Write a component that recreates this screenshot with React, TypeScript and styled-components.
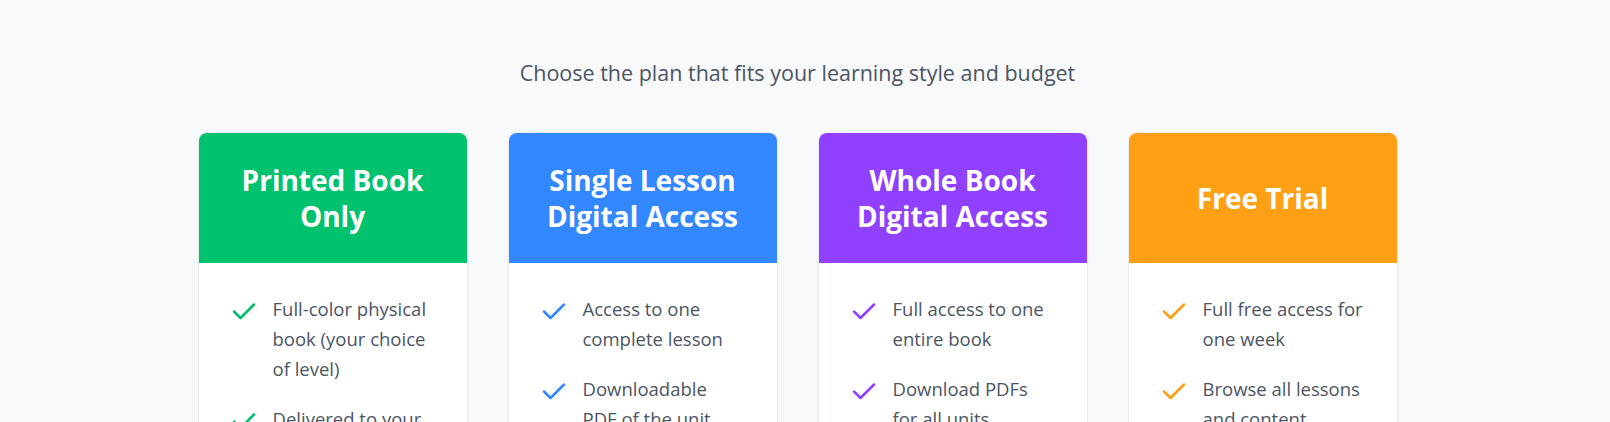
import React from "react";
import styled, { createGlobalStyle } from "styled-components";

const GlobalStyle = createGlobalStyle`
  html, body {
    margin: 0;
    padding: 0;
    background: #f8f9fb;
  }
  body {
    font-family: "Open Sans", "Noto Sans", sans-serif;
    color: #4b5563;
  }
  * { box-sizing: border-box; }
`;

const Section = styled.section`
  padding: 58px 15px 60px 0;
  display: flex;
  flex-direction: column;
  align-items: center;
`;

const Subtitle = styled.p`
  margin: 0 0 45px;
  font-size: 21.5px;
  line-height: 30px;
  color: #4b5563;
  text-align: center;
`;

const Grid = styled.div`
  display: grid;
  grid-template-columns: repeat(4, 268px);
  gap: 42px;
`;

const Card = styled.div`
  background: #ffffff;
  border-radius: 8px;
  overflow: hidden;
  box-shadow: 0 1px 3px rgba(15, 23, 42, 0.08), 0 0 0 1px rgba(15, 23, 42, 0.03);
  display: flex;
  flex-direction: column;
`;

const Header = styled.div<{ $bg: string }>`
  background: ${(p) => p.$bg};
  min-height: 130px;
  padding: 24px 20px;
  display: flex;
  align-items: center;
  justify-content: center;
`;

const Title = styled.h3`
  margin: 0;
  color: #ffffff;
  font-size: 28px;
  line-height: 36.5px;
  font-weight: 700;
  text-align: center;
`;

const Body = styled.ul`
  list-style: none;
  margin: 0;
  padding: 31px 20px 32px 33px;
  display: flex;
  flex-direction: column;
  gap: 20px;
`;

const Item = styled.li`
  display: flex;
  align-items: flex-start;
  gap: 17px;
  font-size: 18.5px;
  line-height: 30px;
  color: #4b5563;
`;

const ItemText = styled.span`
  flex: 0 1 162px;
`;

const CheckIcon = styled.svg<{ $c: string }>`
  flex: 0 0 24px;
  width: 24px;
  height: 20px;
  margin-top: 8px;
  stroke: ${(p) => p.$c};
`;

const Check = ({ color }: { color: string }) => (
  <CheckIcon $c={color} viewBox="0 0 24 20" fill="none" strokeWidth={2.5} strokeLinecap="round" strokeLinejoin="round">
    <path d="M2 9.5 L8.5 16 L22 2.5" />
  </CheckIcon>
);

const plans = [
  {
    title: "Printed Book Only",
    color: "#00c16e",
    items: [
      "Full-color physical book (your choice of level)",
      "Delivered to your door",
      "Perfect for offline learning",
    ],
  },
  {
    title: "Single Lesson Digital Access",
    color: "#3388ff",
    items: [
      "Access to one complete lesson",
      "Downloadable PDF of the unit",
      "Audio and video resources",
    ],
  },
  {
    title: "Whole Book Digital Access",
    color: "#9041ff",
    items: [
      "Full access to one entire book",
      "Download PDFs for all units",
      "All audio and video resources",
    ],
  },
  {
    title: "Free Trial",
    color: "#ff9f14",
    items: [
      "Full free access for one week",
      "Browse all lessons and content",
      "No credit card required",
    ],
  },
];

export default function App() {
  return (
    <>
      <GlobalStyle />
      <Section>
        <Subtitle>Choose the plan that fits your learning style and budget</Subtitle>
        <Grid>
          {plans.map((p) => (
            <Card key={p.title}>
              <Header $bg={p.color}>
                <Title>{p.title}</Title>
              </Header>
              <Body>
                {p.items.map((it) => (
                  <Item key={it}>
                    <Check color={p.color} />
                    <ItemText>{it}</ItemText>
                  </Item>
                ))}
              </Body>
            </Card>
          ))}
        </Grid>
      </Section>
    </>
  );
}
